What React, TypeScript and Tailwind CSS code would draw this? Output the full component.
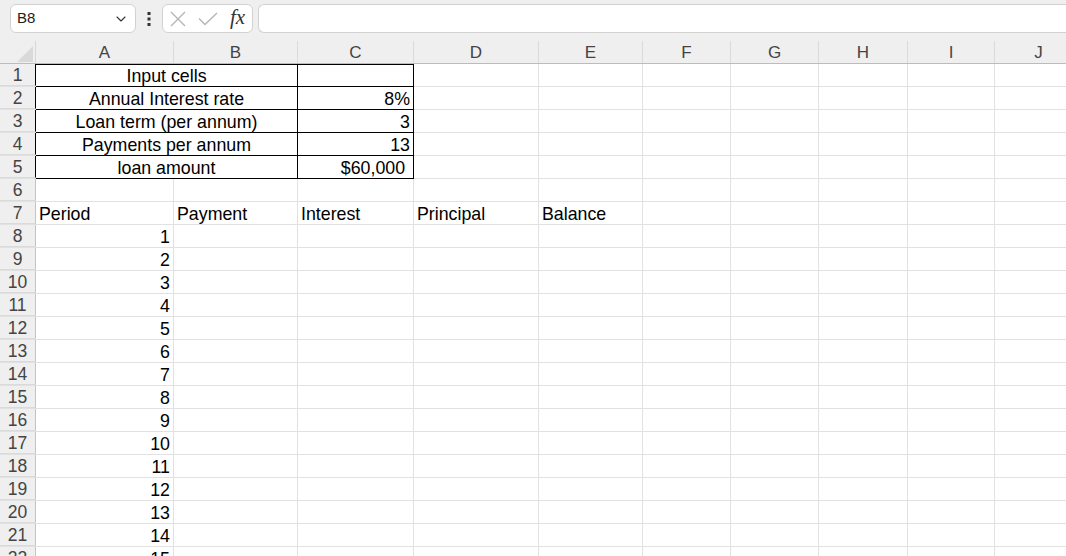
import { ChevronDown } from 'lucide-react'

const COLS = [
  { key: 'A', w: 'w-[138px]' },
  { key: 'B', w: 'w-[124px]' },
  { key: 'C', w: 'w-[116px]' },
  { key: 'D', w: 'w-[125px]' },
  { key: 'E', w: 'w-[104px]' },
  { key: 'F', w: 'w-[88px]' },
  { key: 'G', w: 'w-[88px]' },
  { key: 'H', w: 'w-[89px]' },
  { key: 'I', w: 'w-[87px]' },
  { key: 'J', w: 'w-[88px]' },
]

const INPUTS = [
  { label: 'Input cells', value: '' },
  { label: 'Annual Interest rate', value: '8%' },
  { label: 'Loan term (per annum)', value: '3' },
  { label: 'Payments per annum', value: '13' },
  { label: 'loan amount', value: '$60,000 ' },
]

const HEADINGS = ['Period', 'Payment', 'Interest', 'Principal', 'Balance']

const font = { fontFamily: '"Liberation Sans", Arial, sans-serif' }

function RowHead({ n, dark }: { n: number; dark?: boolean }) {
  return (
    <div
      className={`w-[36px] shrink-0 flex items-center justify-center pt-[2px] bg-[#efefef] text-[17.5px] text-[#444] border-r border-b border-b-[#dadada] ${dark ? 'border-r-black' : 'border-r-[#c4c4c4]'}`}
    >
      {n}
    </div>
  )
}

function Cell({ w, children, align = 'left' }: { w: string; children?: React.ReactNode; align?: 'left' | 'right' }) {
  return (
    <div
      className={`${w} shrink-0 flex items-center pt-[2px] border-r border-[#e1e1e1] px-[3px] whitespace-nowrap overflow-hidden ${align === 'right' ? 'justify-end' : 'justify-start'}`}
    >
      {children}
    </div>
  )
}

function TopBar() {
  return (
    <div className="h-[37px] flex items-start pt-[4px] pl-[10px] bg-[#efefef]">
      {/* name box */}
      <div className="w-[126px] h-[29px] flex items-center justify-between rounded-[6px] border border-[#d2d2d2] bg-white pl-[6px] pr-[6px]">
        <span className="text-[15px] text-[#222]">B8</span>
        <ChevronDown size={16} strokeWidth={1.6} className="text-[#333]" />
      </div>
      <svg width="4" height="14" viewBox="0 0 4 14" className="ml-[11px] mt-[8px]">
        <rect x="0.5" y="0" width="3" height="3" fill="#333" />
        <rect x="0.5" y="5.5" width="3" height="3" fill="#333" />
        <rect x="0.5" y="11" width="3" height="3" fill="#333" />
      </svg>
      <div className="ml-[11px] w-[91px] h-[29px] flex items-center rounded-[6px] border border-[#d2d2d2] bg-white pl-[7px]">
        <svg width="16" height="16" viewBox="0 0 16 16">
          <path d="M1 1 L15 15 M15 1 L1 15" stroke="#b5b5b5" strokeWidth="1.4" fill="none" />
        </svg>
        <svg width="20" height="14" viewBox="0 0 20 14" className="ml-[12px]">
          <path d="M1 6.5 L7 12.5 L19 1" stroke="#b5b5b5" strokeWidth="1.4" fill="none" />
        </svg>
        <span
          className="ml-[12px] text-[21px] italic text-[#333] leading-none -mt-[3px]"
          style={{ fontFamily: '"Liberation Serif", "Times New Roman", serif' }}
        >
          fx
        </span>
      </div>
      <div className="ml-[5px] flex-1 h-[29px] rounded-l-[6px] border border-r-0 border-[#d2d2d2] bg-white" />
    </div>
  )
}

function ColumnHeader() {
  return (
    <div className="h-[27px] flex items-end bg-[#efefef] border-b border-[#bcbcbc]">
      <div className="w-[36px] h-[22px] shrink-0 flex items-end justify-end pr-[2px] pb-[1px] border-r border-[#d6d6d6]">
        <svg width="16" height="16" viewBox="0 0 16 16">
          <path d="M16 0 L16 16 L0 16 Z" fill="#d9d9d9" />
        </svg>
      </div>
      {COLS.map(c => (
        <div
          key={c.key}
          className={`${c.w} h-[22px] shrink-0 flex items-center justify-center pt-[1px] border-r border-[#dadada] text-[17px] text-[#444]`}
        >
          {c.key}
        </div>
      ))}
    </div>
  )
}

export default function App() {
  const periods = Array.from({ length: 15 }, (_, i) => i + 1)

  return (
    <div className="w-[1066px] h-[556px] overflow-hidden bg-white text-black" style={font}>
      <TopBar />
      <ColumnHeader />

      <div className="text-[17.8px]">
        {/* input block, A1:C5 with black borders, A:B merged */}
        {INPUTS.map((r, i) => (
          <div key={r.label} className="h-[23px] flex border-b border-[#e1e1e1]">
            <RowHead n={i + 1} dark />
            <div
              className={`w-[262px] shrink-0 flex items-center justify-center pt-[2px] border-r border-b border-black -mb-px ${i === 0 ? 'shadow-[inset_0_1px_0_#000]' : ''}`}
            >
              {r.label}
            </div>
            <div
              className={`w-[116px] shrink-0 flex items-center justify-end pt-[2px] pr-[3px] border-r border-b border-black -mb-px whitespace-pre ${i === 0 ? 'shadow-[inset_0_1px_0_#000]' : ''}`}
            >
              {r.value}
            </div>
            {COLS.slice(3).map(c => <Cell key={c.key} w={c.w} />)}
          </div>
        ))}

        {/* row 6 */}
        <div className="h-[23px] flex border-b border-[#e1e1e1]">
          <RowHead n={6} />
          {COLS.map(c => <Cell key={c.key} w={c.w} />)}
        </div>

        {/* row 7 headings */}
        <div className="h-[23px] flex border-b border-[#e1e1e1]">
          <RowHead n={7} />
          {COLS.map((c, i) => <Cell key={c.key} w={c.w}>{HEADINGS[i]}</Cell>)}
        </div>

        {periods.map((p, i) => (
          <div key={p} className="h-[23px] flex border-b border-[#e1e1e1]">
            <RowHead n={8 + i} />
            {COLS.map((c, j) => (
              <Cell key={c.key} w={c.w} align={j === 0 ? 'right' : 'left'}>
                {j === 0 ? p : null}
              </Cell>
            ))}
          </div>
        ))}
      </div>
    </div>
  )
}
